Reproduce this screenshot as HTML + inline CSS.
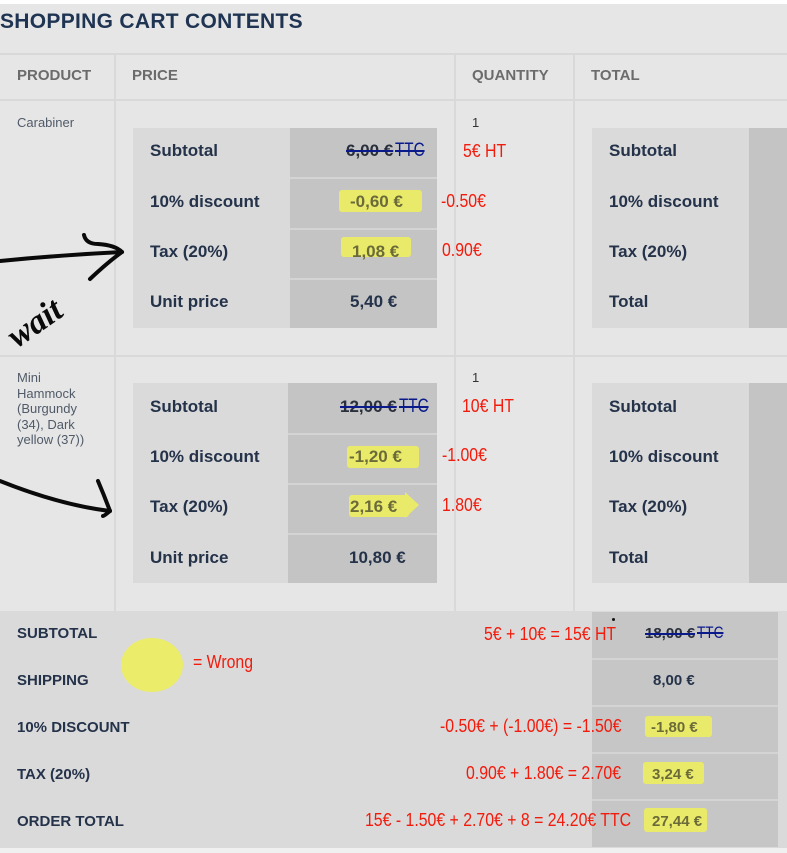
<!DOCTYPE html>
<html><head><meta charset="utf-8"><style>
*{margin:0;padding:0;box-sizing:border-box}
body{width:787px;height:853px;background:#e6e6e6;position:relative;overflow:hidden;font-family:"Liberation Sans",sans-serif}
.a{position:absolute}
.t{color:#24324a;font-weight:bold;font-size:17px}
.h{color:#6b6b6b;font-weight:bold;font-size:15px}
.r{color:#f21b0c;font-family:"Liberation Sans Narrow","Liberation Sans",sans-serif;font-size:18px;transform:scaleX(.88);transform-origin:left center;white-space:nowrap}
.hl{background:#e9ea6a;border-radius:3px}
.line{position:absolute;background:#d9d9d9}
.strike{color:#2a2f3c;text-decoration:line-through;text-decoration-color:#0b1a8a;text-decoration-thickness:2px}
.ttc{color:#0b1a8a;font-weight:normal;font-size:19px;font-family:'Liberation Sans Narrow',sans-serif;text-decoration:line-through;text-decoration-thickness:2px;display:inline-block;transform:scaleX(.8);transform-origin:left center;margin-left:2px}
</style></head><body>
<div class="a" style="left:0;top:0;width:787px;height:4px;background:#fff"></div>
<div class="a" style="left:0;top:10px;font-size:21px;font-weight:bold;color:#1f3452;font-family:'Liberation Sans Narrow','Liberation Sans',sans-serif;letter-spacing:.3px">SHOPPING CART CONTENTS</div>

<div class="line" style="left:0;top:53px;width:787px;height:2px"></div>
<div class="line" style="left:0;top:99px;width:787px;height:2px"></div>
<div class="line" style="left:0;top:355px;width:787px;height:2px"></div>
<div class="line" style="left:114px;top:53px;width:2px;height:558px"></div>
<div class="line" style="left:454px;top:53px;width:2px;height:558px"></div>
<div class="line" style="left:573px;top:53px;width:2px;height:558px"></div>

<div class="a h" style="left:17px;top:67px">PRODUCT</div>
<div class="a h" style="left:132px;top:67px">PRICE</div>
<div class="a h" style="left:472px;top:67px">QUANTITY</div>
<div class="a h" style="left:591px;top:67px">TOTAL</div>

<div class="a" style="left:17px;top:115px;font-size:13px;color:#505a68">Carabiner</div>
<div class="a" style="left:472px;top:115px;font-size:13px;color:#333">1</div>
<div class="a" style="left:17px;top:370px;font-size:13px;color:#505a68;line-height:15.5px;width:90px">Mini<br>Hammock<br>(Burgundy<br>(34), Dark<br>yellow (37))</div>
<div class="a" style="left:472px;top:370px;font-size:13px;color:#333">1</div>

<div class="a" style="left:133px;top:128px;width:157px;height:200px;background:#dadada"></div>
<div class="a" style="left:290px;top:128px;width:147px;height:200px;background:#c4c4c4"></div>
<div class="a" style="left:290px;top:177px;width:147px;height:2px;background:#d4d4d4"></div>
<div class="a" style="left:290px;top:228px;width:147px;height:2px;background:#d4d4d4"></div>
<div class="a" style="left:290px;top:278px;width:147px;height:2px;background:#d4d4d4"></div>
<div class="a t" style="left:150px;top:141px">Subtotal</div>
<div class="a t" style="left:150px;top:192px">10% discount</div>
<div class="a t" style="left:150px;top:242px">Tax (20%)</div>
<div class="a t" style="left:150px;top:292px">Unit price</div>
<div class="a hl" style="left:339px;top:190px;width:83px;height:22px"></div>
<div class="a hl" style="left:341px;top:237px;width:70px;height:20px"></div>
<div class="a t" style="left:346px;top:140px;white-space:nowrap"><span class="strike">6,00 €</span><span class="ttc">TTC</span></div>
<div class="a t" style="left:350px;top:192px;color:#6b6b3a">-0,60 €</div>
<div class="a t" style="left:352px;top:242px;color:#6b6b3a">1,08 €</div>
<div class="a t" style="left:350px;top:292px">5,40 €</div>
<div class="a r" style="left:463px;top:141px">5€ HT</div>
<div class="a r" style="left:441px;top:191px">-0.50€</div>
<div class="a r" style="left:442px;top:240px">0.90€</div>

<div class="a" style="left:592px;top:128px;width:157px;height:200px;background:#dadada"></div>
<div class="a" style="left:749px;top:128px;width:38px;height:200px;background:#c4c4c4"></div>
<div class="a t" style="left:609px;top:141px">Subtotal</div>
<div class="a t" style="left:609px;top:192px">10% discount</div>
<div class="a t" style="left:609px;top:242px">Tax (20%)</div>
<div class="a t" style="left:609px;top:292px">Total</div>

<div class="a" style="left:133px;top:383px;width:155px;height:200px;background:#dadada"></div>
<div class="a" style="left:288px;top:383px;width:149px;height:200px;background:#c4c4c4"></div>
<div class="a" style="left:288px;top:433px;width:149px;height:2px;background:#d4d4d4"></div>
<div class="a" style="left:288px;top:483px;width:149px;height:2px;background:#d4d4d4"></div>
<div class="a" style="left:288px;top:533px;width:149px;height:2px;background:#d4d4d4"></div>
<div class="a t" style="left:150px;top:397px">Subtotal</div>
<div class="a t" style="left:150px;top:447px">10% discount</div>
<div class="a t" style="left:150px;top:497px">Tax (20%)</div>
<div class="a t" style="left:150px;top:548px">Unit price</div>
<div class="a hl" style="left:347px;top:446px;width:72px;height:22px"></div>
<div class="a hl" style="left:349px;top:495px;width:60px;height:22px"></div>
<div class="a" style="left:405px;top:492px;width:0;height:0;border-top:13px solid transparent;border-bottom:13px solid transparent;border-left:14px solid #e9ea6a"></div>
<div class="a t" style="left:340px;top:396px;white-space:nowrap"><span class="strike">12,00 €</span><span class="ttc">TTC</span></div>
<div class="a t" style="left:349px;top:447px;color:#6b6b3a">-1,20 €</div>
<div class="a t" style="left:350px;top:497px;color:#6b6b3a">2,16 €</div>
<div class="a t" style="left:349px;top:548px">10,80 €</div>
<div class="a r" style="left:462px;top:396px">10€ HT</div>
<div class="a r" style="left:442px;top:445px">-1.00€</div>
<div class="a r" style="left:442px;top:495px">1.80€</div>

<div class="a" style="left:592px;top:383px;width:157px;height:200px;background:#dadada"></div>
<div class="a" style="left:749px;top:383px;width:38px;height:200px;background:#c4c4c4"></div>
<div class="a t" style="left:609px;top:397px">Subtotal</div>
<div class="a t" style="left:609px;top:447px">10% discount</div>
<div class="a t" style="left:609px;top:497px">Tax (20%)</div>
<div class="a t" style="left:609px;top:548px">Total</div>

<div class="a" style="left:0;top:611px;width:787px;height:237px;background:#dadada"></div>
<div class="a" style="left:0;top:848px;width:787px;height:5px;background:#f0f0f0"></div>
<div class="a" style="left:592px;top:612px;width:186px;height:235px;background:#c6c6c6"></div>
<div class="a" style="left:592px;top:658px;width:186px;height:2px;background:#d4d4d4"></div>
<div class="a" style="left:592px;top:705px;width:186px;height:2px;background:#d4d4d4"></div>
<div class="a" style="left:592px;top:752px;width:186px;height:2px;background:#d4d4d4"></div>
<div class="a" style="left:592px;top:799px;width:186px;height:2px;background:#d4d4d4"></div>
<div class="a t" style="left:17px;top:625px;font-size:15px">SUBTOTAL</div>
<div class="a t" style="left:17px;top:672px;font-size:15px">SHIPPING</div>
<div class="a t" style="left:17px;top:719px;font-size:15px">10% DISCOUNT</div>
<div class="a t" style="left:17px;top:766px;font-size:15px">TAX (20%)</div>
<div class="a t" style="left:17px;top:813px;font-size:15px">ORDER TOTAL</div>
<div class="a" style="left:121px;top:638px;width:62px;height:54px;border-radius:50%;background:#ecec6b"></div>
<div class="a r" style="left:193px;top:652px">= Wrong</div>
<div class="a r" style="left:484px;top:624px">5€ + 10€ = 15€ HT</div>
<div class="a" style="left:612px;top:618px;width:3px;height:3px;border-radius:50%;background:#111"></div>
<div class="a t" style="left:645px;top:623px;font-size:15px;white-space:nowrap"><span class="strike">18,00 €</span><span class="ttc" style="font-size:17px">TTC</span></div>
<div class="a t" style="left:653px;top:672px;font-size:15px">8,00 €</div>
<div class="a hl" style="left:645px;top:716px;width:67px;height:21px"></div>
<div class="a t" style="left:651px;top:719px;font-size:15px;color:#6b6b3a">-1,80 €</div>
<div class="a r" style="left:440px;top:716px">-0.50€ + (-1.00€) = -1.50€</div>
<div class="a hl" style="left:643px;top:762px;width:61px;height:22px"></div>
<div class="a t" style="left:652px;top:766px;font-size:15px;color:#6b6b3a">3,24 €</div>
<div class="a r" style="left:466px;top:763px">0.90€ + 1.80€ = 2.70€</div>
<div class="a hl" style="left:644px;top:808px;width:63px;height:24px"></div>
<div class="a t" style="left:652px;top:813px;font-size:15px;color:#6b6b3a">27,44 €</div>
<div class="a r" style="left:365px;top:810px">15€ - 1.50€ + 2.70€ + 8 = 24.20€ TTC</div>

<svg class="a" style="left:0;top:0" width="787" height="853">
<g fill="none" stroke="#0a0a0a" stroke-width="4" stroke-linecap="round" stroke-linejoin="round">
<path d="M0 261 Q60 255 122 252"/>
<path d="M84 235 Q86 244 98 244 Q115 245 122 252 Q108 262 90 279"/>
<path d="M0 481 Q60 505 110 511"/>
<path d="M98 481 Q104 495 110 511 Q104 516 103 516"/>
</g>
<text x="0" y="335" transform="rotate(-35 30 315)" font-family="Liberation Serif,serif" font-style="italic" font-weight="bold" font-size="34" fill="#0a0a0a">wait</text>
</svg>
</body></html>
